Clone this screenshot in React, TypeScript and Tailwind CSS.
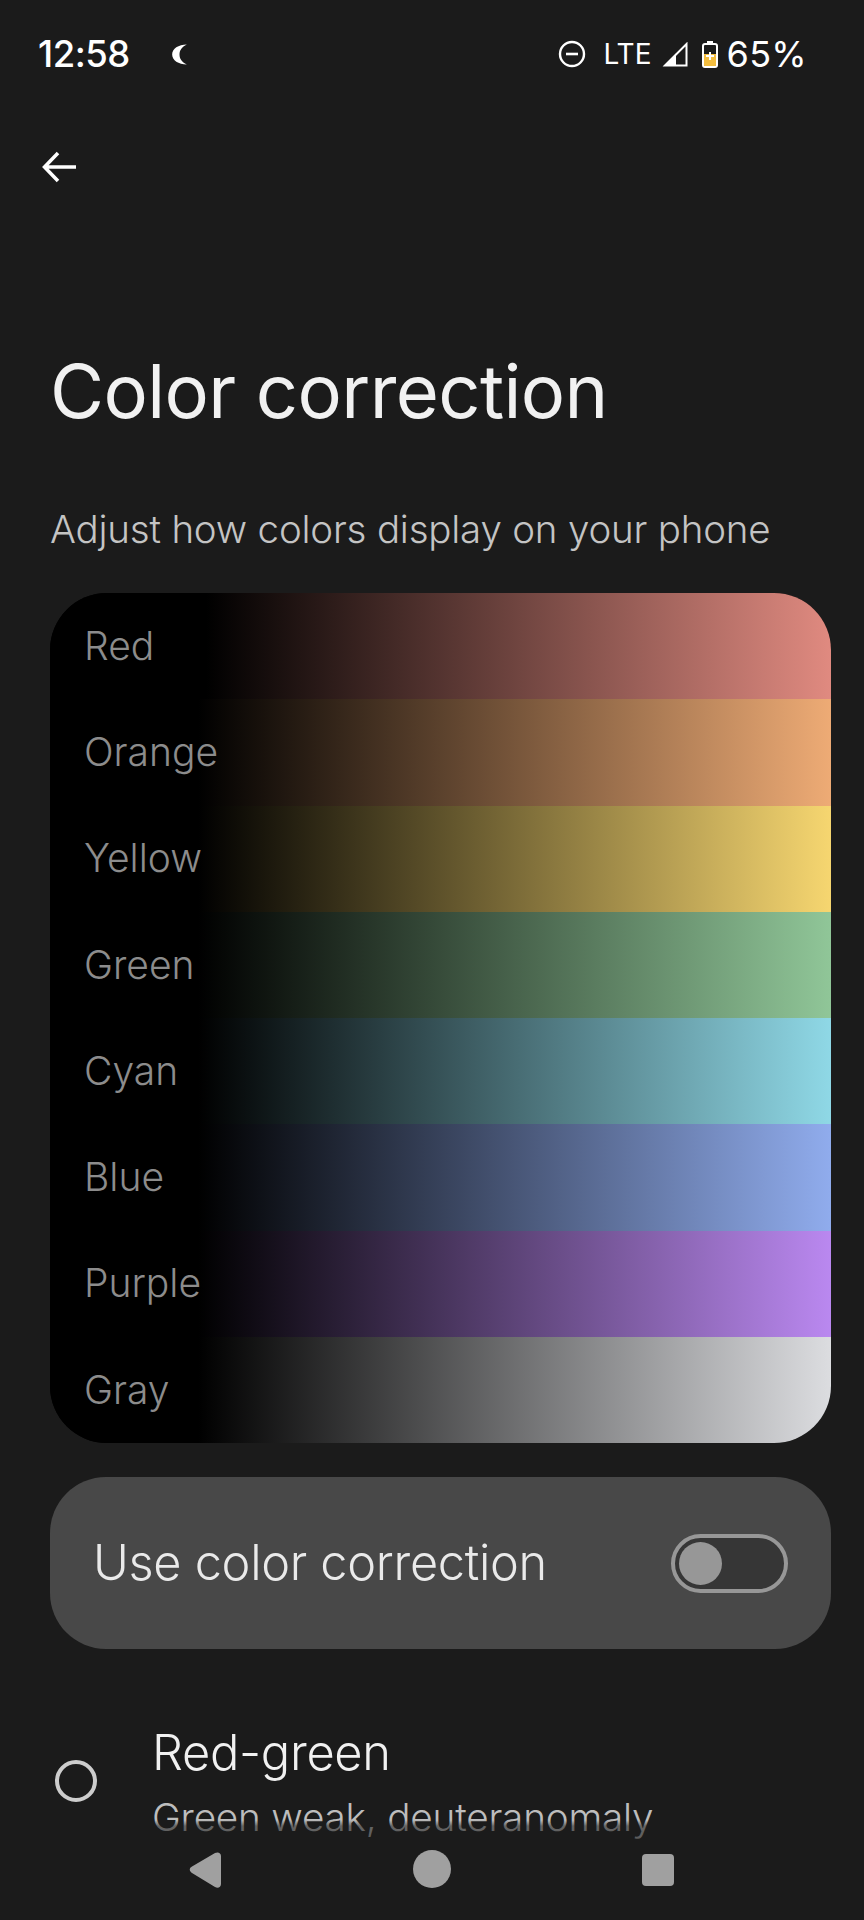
const swatches = [
  { name: "Red", bar: "bg-[linear-gradient(to_right,#000_20%,#e08a80)]" },
  { name: "Orange", bar: "bg-[linear-gradient(to_right,#000_19%,#eeab75)]" },
  { name: "Yellow", bar: "bg-[linear-gradient(to_right,#000_19%,#f6d670)]" },
  { name: "Green", bar: "bg-[linear-gradient(to_right,#000_19%,#90c698)]" },
  { name: "Cyan", bar: "bg-[linear-gradient(to_right,#000_19%,#8fd8e6)]" },
  { name: "Blue", bar: "bg-[linear-gradient(to_right,#000_19%,#90aced)]" },
  { name: "Purple", bar: "bg-[linear-gradient(to_right,#000_19%,#ba88f0)]" },
  { name: "Gray", bar: "bg-[linear-gradient(to_right,#000_19%,#dcdde0)]" },
];

const StatusBar = () => {
  return (
    <div className="h-[108px] pl-[38px] pr-[57px] flex items-center justify-between text-white">
      <div className="flex items-center">
        <span className="text-[36.500px] leading-none font-medium tracking-[-0.5px]">12:58</span>
        <svg viewBox="0 0 14 20" className="ml-[42px] w-[15px] h-[21px]">
          <path d="M14 0.5C6 0.5 0 4.5 0 10s6 9.500 14 9.500C9 17 7 14 7 10s2-7 7-9.500z" fill="#fff" />
        </svg>
      </div>
      <div className="flex items-center">
        <svg viewBox="0 0 28 28" className="w-[28px] h-[28px]">
          <circle cx="14" cy="14" r="12" fill="none" stroke="#fff" strokeWidth="2.4" />
          <rect x="8" y="12.700" width="12" height="2.600" fill="#fff" />
        </svg>
        <span className="ml-[17px] text-[28px] leading-none font-normal">LTE</span>
        <svg viewBox="0 0 26 25" className="ml-[10px] w-[26px] h-[25px]">
          <path d="M24.500 2v21.500H3z" fill="none" stroke="#fff" strokeWidth="2" strokeLinejoin="miter" />
          <path d="M14 11.500V24H1.500z" fill="#fff" />
        </svg>
        <svg viewBox="0 0 16 27" className="ml-[14px] w-[16px] h-[27px]">
          <rect x="5" y="0" width="6" height="3" fill="#fff" />
          <rect x="1" y="3" width="14" height="23" rx="2" fill="#1b1b1b" stroke="#fff" strokeWidth="2" />
          <path d="M2 13h12v11.500a.5.5 0 0 1-.5.5h-11a.5.5 0 0 1-.5-.5z" fill="#f3bd3f" />
          <path d="M7 11h2v3h3v2H9v3H7v-3H4v-2h3z" fill="#fff" />
        </svg>
        <span className="ml-[9px] text-[36px] leading-none font-normal tracking-[0.3px]">65%</span>
      </div>
    </div>
  );
};

const ColorCorrection = () => {
  return (
    <div className="relative w-[864px] h-[1920px] overflow-hidden bg-[#1b1b1b] font-['Inter',sans-serif]">
      <StatusBar />

      <div className="h-[118px] pl-[42px] flex items-center">
        <svg viewBox="0 0 35 32" className="w-[35px] h-[32px]">
          <path d="M34 16H3M16 2 2.500 16 16 30" fill="none" stroke="#fff" strokeWidth="3.5" />
        </svg>
      </div>

      <h1 className="mt-[117px] pl-[50px] h-[96px] text-[74px] leading-[96px] font-normal text-[#f1f1f1] tracking-[-0.6px]">
        Color correction
      </h1>

      <p className="mt-[65px] pl-[50px] h-[50px] text-[38.500px] leading-[50px] font-light text-[#c4c4c4] tracking-[-0.2px]">
        Adjust how colors display on your phone
      </p>

      <div className="mt-[39px] mx-[50px] w-[781px] rounded-[57px] overflow-hidden bg-black">
        {swatches.map((s) => (
          <div key={s.name} className={`h-[106.250px] pl-[34px] flex items-center ${s.bar}`}>
            <span className="text-[39px] font-light text-[#8c8c8c]">{s.name}</span>
          </div>
        ))}
      </div>

      <div className="mt-[34px] mx-[50px] w-[781px] h-[172px] rounded-[56px] bg-[#484848] pl-[43px] pr-[43px] flex items-center justify-between">
        <span className="text-[48.700px] font-light text-[#eaeaea] tracking-[-0.3px]">Use color correction</span>
        <div className="w-[117px] h-[59px] rounded-full border-4 border-[#979797] bg-[#363636] pl-[4px] flex items-center">
          <div className="w-[43px] h-[43px] rounded-full bg-[#979797]" />
        </div>
      </div>

      <div className="mt-[77px] pl-[55px] flex items-start">
        <div className="mt-[34px] w-[42px] h-[42px] rounded-full border-4 border-[#cdcdcd]" />
        <div className="ml-[55px]">
          <div className="text-[48.800px] leading-[54px] font-light text-[#f1f1f1] tracking-[-0.3px]">Red-green</div>
          <div className="mt-[15px] text-[38.700px] leading-[44px] font-light text-[#bdbdbd] tracking-[-0.2px]">
            Green weak, deuteranomaly
          </div>
        </div>
      </div>

      {/* bottom fade + nav bar sit over the scrolled list */}
      <div className="absolute left-0 right-0 bottom-0 h-[104px] bg-[linear-gradient(to_bottom,rgba(27,27,27,0)_4px,rgba(27,27,27,0.55)_10px,rgba(27,27,27,0.6)_22px,#1b1b1b_24px)]">
        <div className="absolute left-0 right-0 bottom-0 h-[80px] flex items-start">
          <svg viewBox="0 0 32 36" className="absolute left-[189px] top-[12px] w-[32px] h-[36px]">
            <path d="M3 14.500 26 1c3-1.500 6 0 6 3v28c0 3-3 5-6 3L3 21c-3-2-3-5 0-6.500z" fill="#a0a0a0" />
          </svg>
          <div className="absolute left-[413px] top-[10px] w-[38px] h-[38px] rounded-full bg-[#a0a0a0]" />
          <div className="absolute left-[642px] top-[14px] w-[32px] h-[32px] rounded-[4px] bg-[#a0a0a0]" />
        </div>
      </div>
    </div>
  );
};

export default ColorCorrection;
